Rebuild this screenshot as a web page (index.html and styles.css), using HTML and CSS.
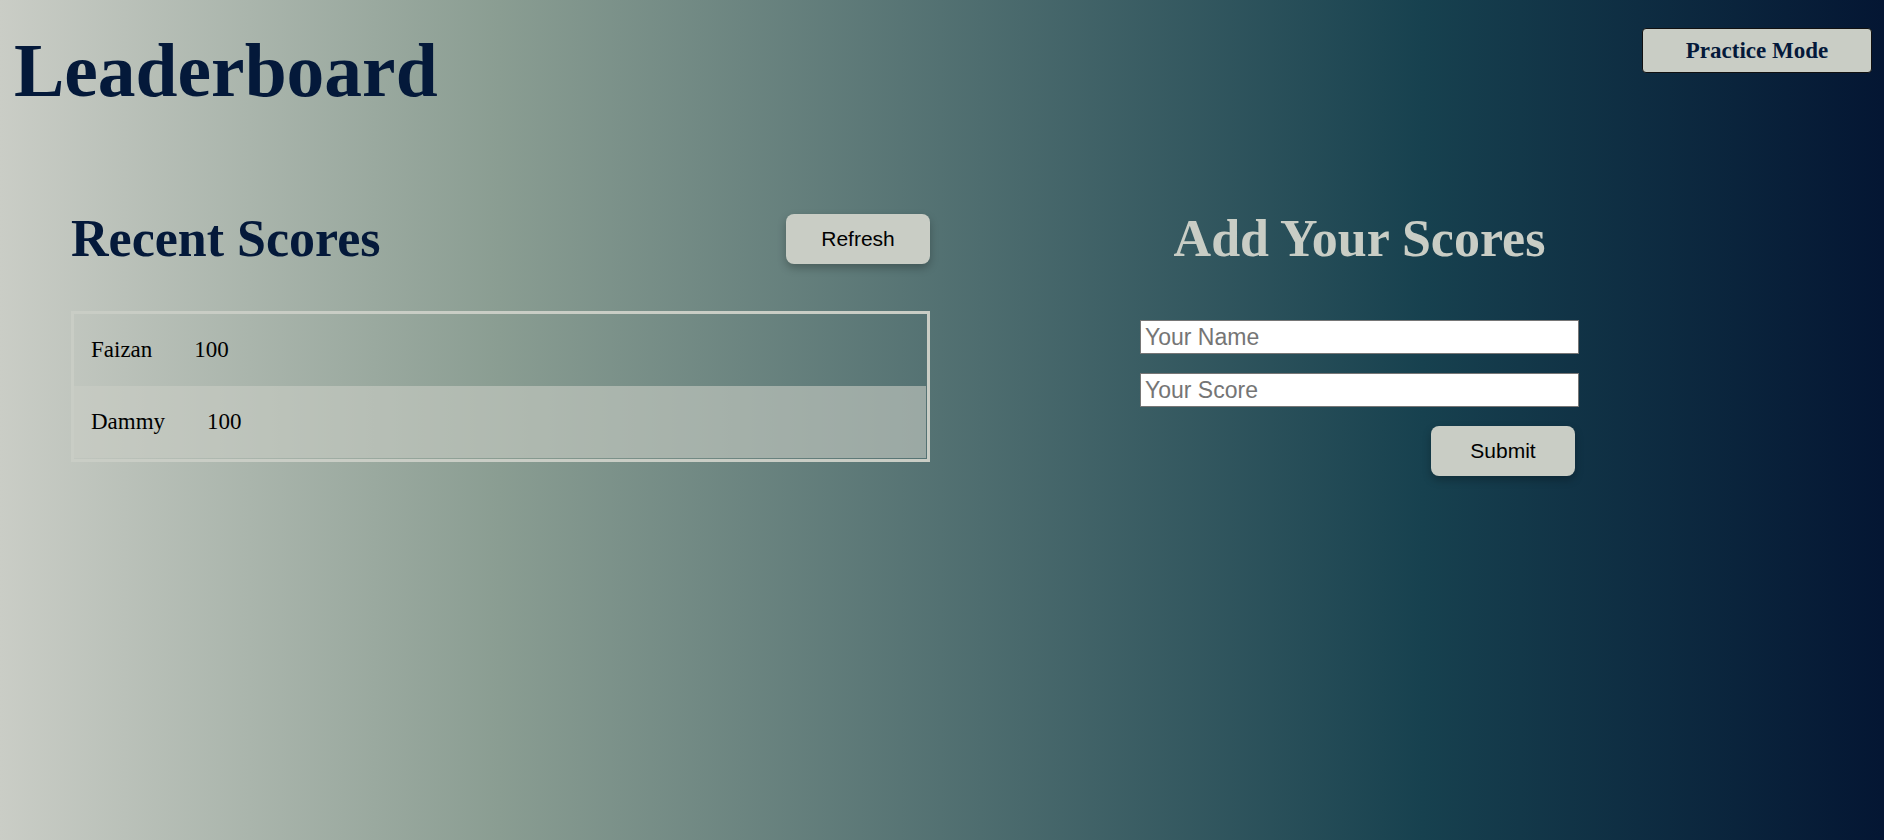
FILE: index.html
```html
<!DOCTYPE html>
<html lang="en">
<head>
<meta charset="utf-8">
<title>Leaderboard</title>
<link rel="stylesheet" href="styles.css">
</head>
<body>
<header class="topbar">
  <h1 class="title">Leaderboard</h1>
  <button class="practice-btn" type="button">Practice Mode</button>
</header>
<main class="board">
  <section class="recent">
    <div class="recent-head">
      <h2 class="section-title">Recent Scores</h2>
      <button class="action-btn" type="button">Refresh</button>
    </div>
    <ul class="score-list">
      <li class="score-row"><span class="name">Faizan</span><span class="score">100</span></li>
      <li class="score-row alt"><span class="name">Dammy</span><span class="score">100</span></li>
    </ul>
  </section>
  <section class="add">
    <h2 class="section-title light">Add Your Scores</h2>
    <form class="score-form">
      <input class="field" type="text" placeholder="Your Name">
      <input class="field" type="text" placeholder="Your Score">
      <button class="action-btn submit" type="button">Submit</button>
    </form>
  </section>
</main>
</body>
</html>
```

FILE: styles.css
```css
html, body {
  margin: 0;
  padding: 0;
}
body {
  min-height: 100vh;
  background: linear-gradient(to right, #cacdc6 0%, #8a9d92 26.5%, #17414f 75.5%, #041633 100%);
  font-family: "Liberation Serif", "Times New Roman", serif;
  color: #04193a;
}
.topbar {
  display: flex;
  justify-content: space-between;
  align-items: flex-start;
  padding: 28px 12px 0 14px;
}
.title {
  margin: 0;
  font-size: 75.5px;
  font-weight: bold;
  color: #04193a;
  line-height: normal;
}
.practice-btn {
  width: 230px;
  height: 45px;
  background: #c9cdc5;
  border: 1px solid #111;
  border-radius: 4px;
  font-family: "Liberation Serif", "Times New Roman", serif;
  font-weight: bold;
  font-size: 23px;
  color: #04193a;
  padding: 0;
}
.board {
  display: flex;
  padding: 95px 0 0 71px;
}
.recent, .add {
  width: 859px;
  flex: none;
}
.recent-head {
  display: flex;
  justify-content: space-between;
  align-items: center;
}
.section-title {
  margin: 0;
  font-size: 52px;
  font-weight: bold;
  line-height: normal;
  color: #04193a;
}
.section-title.light {
  color: #c9cdc5;
  text-align: center;
}
.action-btn {
  width: 144px;
  height: 50px;
  border: none;
  border-radius: 8px;
  background: #c9cdc5;
  box-shadow: 0 4px 8px rgba(0, 0, 0, 0.25);
  font-family: "Liberation Sans", Arial, sans-serif;
  font-size: 21px;
  color: #000;
  padding: 0;
}
.score-list {
  list-style: none;
  margin: 43px 0 0;
  padding: 0 1px 1px 0;
  border: 3px solid #c9cdc5;
}
.score-row {
  display: flex;
  align-items: center;
  height: 72px;
  padding-left: 17px;
  font-size: 23px;
  color: #000;
}
.score-row.alt {
  background: rgba(201, 205, 197, 0.6);
}
.score-row .score {
  margin-left: 42px;
}
.score-form {
  width: 439px;
  margin: 52px auto 0;
  display: flex;
  flex-direction: column;
  gap: 19px;
}
.field {
  box-sizing: border-box;
  width: 100%;
  height: 34px;
  margin: 0;
  padding: 0 4px;
  border: 1px solid #767676;
  background: #fff;
  font-family: "Liberation Sans", Arial, sans-serif;
  font-size: 23px;
  color: #000;
}
.field::placeholder {
  color: #757575;
}
.submit {
  align-self: flex-end;
  margin-right: 4px;
}
```
